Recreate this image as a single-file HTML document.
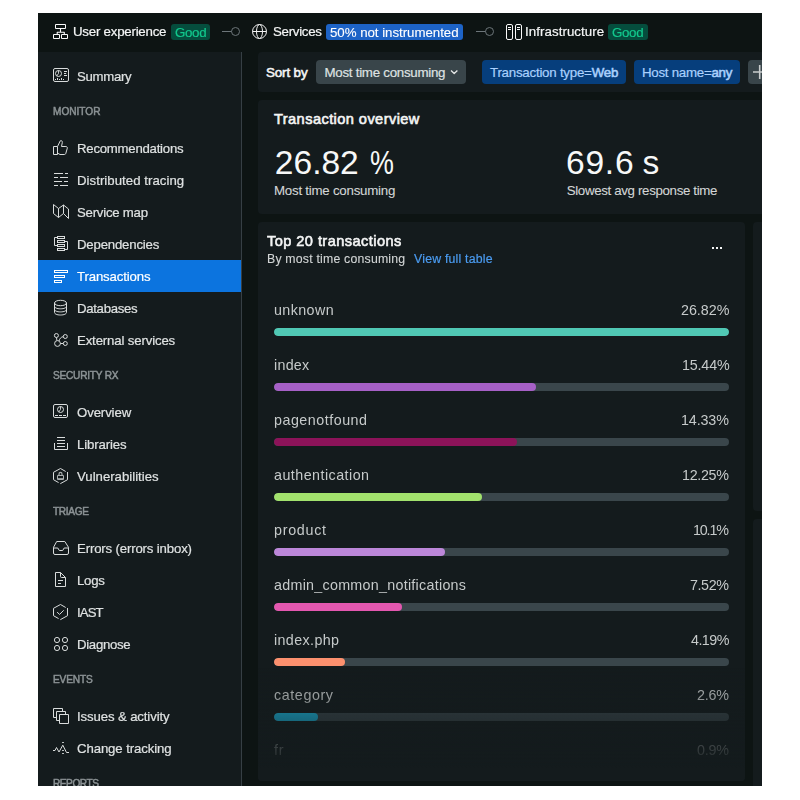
<!DOCTYPE html>
<html lang="en"><head><meta charset="utf-8"><title>Transactions</title>
<style>
html,body{margin:0;padding:0;background:#fff;}
body{width:800px;height:800px;position:relative;overflow:hidden;font-family:"Liberation Sans",sans-serif;}
#app{position:absolute;left:38px;top:13px;width:724px;height:773px;background:#0d1413;overflow:hidden;}
.abs{position:absolute;}
.t{position:absolute;white-space:nowrap;line-height:1;transform:translateY(-50%);-webkit-text-stroke:0.2px currentColor;will-change:transform;}
.t .sb{-webkit-text-stroke:0.55px currentColor;}
#topbar{left:0;top:0;width:724px;height:39px;background:#0d1413;}
#side{left:0;top:39px;width:203px;height:734px;background:#141b1d;border-right:1px solid #363f44;}
#sel{left:0;top:247px;width:203px;height:32px;background:#0c74df;}
.card{position:absolute;background:#141b1d;border-radius:4px;}
.badge{position:absolute;border-radius:3px;}
.track{position:absolute;left:236px;width:455px;height:8px;border-radius:4px;background:#3a464b;overflow:hidden;}
.fill{position:absolute;left:0;top:0;height:8px;border-radius:4px;}
svg{position:absolute;overflow:visible;}
</style></head><body><div id="app">

<div class="abs" id="topbar"></div>
<div class="abs" id="side"></div>
<div class="abs" id="sel"></div>
<div class="badge" style="left:133px;top:11px;width:39px;height:16px;background:#054d3d"></div>
<div class="badge" style="left:288.2px;top:11px;width:137.3px;height:16px;background:#1d63c6"></div>
<div class="badge" style="left:570px;top:11px;width:39.5px;height:16px;background:#054d3d"></div>
<div class="card" style="left:220px;top:39px;width:520px;height:40px;border-radius:4px 0 0 4px"></div>
<div class="abs" style="left:278px;top:47px;width:150px;height:24px;border-radius:4px;background:#39454a"></div>
<div class="abs" style="left:443.5px;top:47px;width:144.5px;height:24px;border-radius:4px;background:#063e7c"></div>
<div class="abs" style="left:595.5px;top:47px;width:106.5px;height:24px;border-radius:4px;background:#063e7c"></div>
<div class="abs" style="left:709.5px;top:47px;width:30px;height:24px;border-radius:4px;background:#39454a"></div>
<div class="card" style="left:220px;top:87px;width:520px;height:114px;border-radius:4px 0 0 4px"></div>
<div class="card" style="left:220px;top:209px;width:487px;height:559px"></div>
<div class="card" style="left:715px;top:209px;width:20px;height:289px"></div>
<div class="card" style="left:715px;top:506px;width:20px;height:300px"></div>
<div class="track" style="top:315px"><div class="fill" style="width:455.0px;background:#50c8b4"></div></div>
<div class="track" style="top:370px"><div class="fill" style="width:261.9px;background:#a660c6"></div></div>
<div class="track" style="top:425px"><div class="fill" style="width:243.1px;background:#8c1359"></div></div>
<div class="track" style="top:480px"><div class="fill" style="width:207.8px;background:#a2e26d"></div></div>
<div class="track" style="top:535px"><div class="fill" style="width:171.4px;background:#bc87d9"></div></div>
<div class="track" style="top:590px"><div class="fill" style="width:127.6px;background:#e357af"></div></div>
<div class="track" style="top:645px"><div class="fill" style="width:71.1px;background:#fc906e"></div></div>
<div class="track" style="top:700px"><div class="fill" style="width:44.1px;background:#1bbde7"></div></div>
<div class="track" style="top:755px"><div class="fill" style="width:15.3px;background:#555"></div></div>
<div class="t" id="t0" style="left:38.8px;top:64.0px;font-size:13.2px;font-weight:400;color:#dfe2e2;letter-spacing:-0.304px;">Summary</div>
<div class="t" id="t1" style="left:38.8px;top:136.0px;font-size:13.2px;font-weight:400;color:#dfe2e2;letter-spacing:-0.240px;">Recommendations</div>
<div class="t" id="t2" style="left:38.8px;top:168.0px;font-size:13.2px;font-weight:400;color:#dfe2e2;letter-spacing:0.045px;">Distributed tracing</div>
<div class="t" id="t3" style="left:38.8px;top:200.0px;font-size:13.2px;font-weight:400;color:#dfe2e2;letter-spacing:-0.230px;">Service map</div>
<div class="t" id="t4" style="left:38.8px;top:232.0px;font-size:13.2px;font-weight:400;color:#dfe2e2;letter-spacing:-0.184px;">Dependencies</div>
<div class="t" id="t5" style="left:39.4px;top:264.0px;font-size:13.2px;font-weight:400;color:#ffffff;letter-spacing:-0.129px;">Transactions</div>
<div class="t" id="t6" style="left:38.8px;top:296.0px;font-size:13.2px;font-weight:400;color:#dfe2e2;letter-spacing:-0.306px;">Databases</div>
<div class="t" id="t7" style="left:38.8px;top:328.0px;font-size:13.2px;font-weight:400;color:#dfe2e2;letter-spacing:-0.139px;">External services</div>
<div class="t" id="t8" style="left:38.8px;top:400.0px;font-size:13.2px;font-weight:400;color:#dfe2e2;letter-spacing:-0.110px;">Overview</div>
<div class="t" id="t9" style="left:38.8px;top:432.0px;font-size:13.2px;font-weight:400;color:#dfe2e2;letter-spacing:-0.122px;">Libraries</div>
<div class="t" id="t10" style="left:38.8px;top:464.0px;font-size:13.2px;font-weight:400;color:#dfe2e2;letter-spacing:-0.002px;">Vulnerabilities</div>
<div class="t" id="t11" style="left:38.8px;top:536.0px;font-size:13.2px;font-weight:400;color:#dfe2e2;letter-spacing:-0.149px;">Errors (errors inbox)</div>
<div class="t" id="t12" style="left:38.8px;top:568.0px;font-size:13.2px;font-weight:400;color:#dfe2e2;letter-spacing:-0.270px;">Logs</div>
<div class="t" id="t13" style="left:38.8px;top:600.0px;font-size:13.2px;font-weight:400;color:#dfe2e2;letter-spacing:-0.904px;">IAST</div>
<div class="t" id="t14" style="left:38.8px;top:632.0px;font-size:13.2px;font-weight:400;color:#dfe2e2;letter-spacing:-0.303px;">Diagnose</div>
<div class="t" id="t15" style="left:38.8px;top:704.0px;font-size:13.2px;font-weight:400;color:#dfe2e2;letter-spacing:-0.122px;">Issues &amp; activity</div>
<div class="t" id="t16" style="left:38.8px;top:736.0px;font-size:13.2px;font-weight:400;color:#dfe2e2;letter-spacing:-0.103px;">Change tracking</div>
<div class="t" id="t17" style="left:15.2px;top:99.3px;font-size:10.1px;font-weight:400;color:#8b9294;letter-spacing:0.003px;-webkit-text-stroke:0.5px #8b9294;">MONITOR</div>
<div class="t" id="t18" style="left:15.2px;top:363.3px;font-size:10.1px;font-weight:400;color:#8b9294;letter-spacing:-0.219px;-webkit-text-stroke:0.5px #8b9294;">SECURITY RX</div>
<div class="t" id="t19" style="left:15.2px;top:499.3px;font-size:10.1px;font-weight:400;color:#8b9294;letter-spacing:-0.316px;-webkit-text-stroke:0.5px #8b9294;">TRIAGE</div>
<div class="t" id="t20" style="left:15.2px;top:667.3px;font-size:10.1px;font-weight:400;color:#8b9294;letter-spacing:-0.118px;-webkit-text-stroke:0.5px #8b9294;">EVENTS</div>
<div class="t" id="t21" style="left:15.2px;top:771.3px;font-size:10.1px;font-weight:400;color:#8b9294;letter-spacing:-0.454px;-webkit-text-stroke:0.5px #8b9294;">REPORTS</div>
<div class="t" id="t22" style="left:35.0px;top:18.5px;font-size:13.3px;font-weight:400;color:#f4f5f5;letter-spacing:-0.238px;">User experience</div>
<div class="t" id="t23" style="left:136.8px;top:20.0px;font-size:13.3px;font-weight:400;color:#12c98d;letter-spacing:-0.310px;">Good</div>
<div class="t" id="t24" style="left:234.5px;top:18.5px;font-size:13.3px;font-weight:400;color:#f4f5f5;letter-spacing:-0.286px;">Services</div>
<div class="t" id="t25" style="left:292.4px;top:20.0px;font-size:13.3px;font-weight:400;color:#ffffff;letter-spacing:-0.040px;-webkit-text-stroke:0.1px;">50% not instrumented</div>
<div class="t" id="t26" style="left:487.3px;top:18.5px;font-size:13.3px;font-weight:400;color:#f4f5f5;letter-spacing:0.066px;">Infrastructure</div>
<div class="t" id="t27" style="left:573.8px;top:20.0px;font-size:13.3px;font-weight:400;color:#12c98d;letter-spacing:-0.310px;">Good</div>
<div class="t" id="t28" style="left:228.0px;top:59.5px;font-size:13.4px;font-weight:400;color:#f4f5f5;letter-spacing:-0.137px;will-change:auto;-webkit-text-stroke:0.55px;">Sort by</div>
<div class="t" id="t29" style="left:286.5px;top:60.0px;font-size:13.3px;font-weight:400;color:#dfe2e2;letter-spacing:-0.258px;will-change:auto;">Most time consuming</div>
<div class="t" id="t30" style="left:452.0px;top:60.0px;font-size:13.3px;font-weight:400;color:#a9d0fd;letter-spacing:-0.231px;will-change:auto;">Transaction type=<span class="sb">Web</span></div>
<div class="t" id="t31" style="left:604.0px;top:60.0px;font-size:13.3px;font-weight:400;color:#a9d0fd;letter-spacing:-0.268px;will-change:auto;">Host name=<span class="sb">any</span></div>
<div class="t" id="t32" style="left:236.0px;top:106.0px;font-size:14.6px;font-weight:400;color:#f4f5f5;letter-spacing:0.424px;will-change:auto;-webkit-text-stroke:0.6px;">Transaction overview</div>
<div class="t" id="t33" style="left:236.8px;top:150.4px;font-size:33.6px;font-weight:400;color:#f7f8f8;letter-spacing:-0.008px;will-change:auto;-webkit-text-stroke:0;">26.82</div>
<div class="t" id="t34" style="left:332.1px;top:150.4px;font-size:33.6px;font-weight:400;color:#f7f8f8;letter-spacing:0.000px;will-change:auto;-webkit-text-stroke:0;transform-origin:0 50%;transform:translateY(-50%) scaleX(0.80);">%</div>
<div class="t" id="t35" style="left:236.0px;top:178.0px;font-size:13.3px;font-weight:400;color:#d3d6d6;letter-spacing:-0.241px;will-change:auto;-webkit-text-stroke:0.1px;">Most time consuming</div>
<div class="t" id="t36" style="left:528.0px;top:150.4px;font-size:33.6px;font-weight:400;color:#f7f8f8;letter-spacing:0.747px;will-change:auto;-webkit-text-stroke:0;">69.6</div>
<div class="t" id="t37" style="left:604.4px;top:150.4px;font-size:33.6px;font-weight:400;color:#f7f8f8;letter-spacing:0.000px;will-change:auto;-webkit-text-stroke:0;">s</div>
<div class="t" id="t38" style="left:528.7px;top:178.0px;font-size:13.3px;font-weight:400;color:#d3d6d6;letter-spacing:-0.338px;will-change:auto;-webkit-text-stroke:0.1px;">Slowest avg response time</div>
<div class="t" id="t39" style="left:228.6px;top:228.0px;font-size:14.6px;font-weight:400;color:#f4f5f5;letter-spacing:0.430px;-webkit-text-stroke:0.6px;">Top 20 transactions</div>
<div class="t" id="t40" style="left:228.6px;top:245.5px;font-size:12.3px;font-weight:400;color:#d3d6d6;letter-spacing:0.202px;-webkit-text-stroke:0.1px;">By most time consuming</div>
<div class="t" id="t41" style="left:375.9px;top:245.5px;font-size:12.3px;font-weight:400;color:#4a9bf0;letter-spacing:0.210px;">View full table</div>
<div class="t" id="t42" style="left:236.0px;top:297.0px;font-size:14.3px;font-weight:400;color:#c6caca;letter-spacing:0.394px;-webkit-text-stroke:0;">unknown</div>
<div class="t" id="t43" style="left:642.8px;top:297.0px;font-size:14.3px;font-weight:400;color:#c6caca;letter-spacing:-0.020px;-webkit-text-stroke:0;">26.82%</div>
<div class="t" id="t44" style="left:236.0px;top:352.0px;font-size:14.3px;font-weight:400;color:#c6caca;letter-spacing:0.253px;-webkit-text-stroke:0;">index</div>
<div class="t" id="t45" style="left:643.5px;top:352.0px;font-size:14.3px;font-weight:400;color:#c6caca;letter-spacing:-0.170px;-webkit-text-stroke:0;">15.44%</div>
<div class="t" id="t46" style="left:236.0px;top:407.0px;font-size:14.3px;font-weight:400;color:#c6caca;letter-spacing:0.503px;-webkit-text-stroke:0;">pagenotfound</div>
<div class="t" id="t47" style="left:643.3px;top:407.0px;font-size:14.3px;font-weight:400;color:#c6caca;letter-spacing:-0.120px;-webkit-text-stroke:0;">14.33%</div>
<div class="t" id="t48" style="left:236.0px;top:462.0px;font-size:14.3px;font-weight:400;color:#c6caca;letter-spacing:0.459px;-webkit-text-stroke:0;">authentication</div>
<div class="t" id="t49" style="left:644.3px;top:462.0px;font-size:14.3px;font-weight:400;color:#c6caca;letter-spacing:-0.320px;-webkit-text-stroke:0;">12.25%</div>
<div class="t" id="t50" style="left:236.0px;top:517.0px;font-size:14.3px;font-weight:400;color:#c6caca;letter-spacing:0.719px;-webkit-text-stroke:0;">product</div>
<div class="t" id="t51" style="left:655.3px;top:517.0px;font-size:14.3px;font-weight:400;color:#c6caca;letter-spacing:-1.162px;-webkit-text-stroke:0;">10.1%</div>
<div class="t" id="t52" style="left:236.0px;top:572.0px;font-size:14.3px;font-weight:400;color:#c6caca;letter-spacing:0.273px;-webkit-text-stroke:0;">admin_common_notifications</div>
<div class="t" id="t53" style="left:652.3px;top:572.0px;font-size:14.3px;font-weight:400;color:#c6caca;letter-spacing:-0.412px;-webkit-text-stroke:0;">7.52%</div>
<div class="t" id="t54" style="left:236.0px;top:627.0px;font-size:14.3px;font-weight:400;color:#c6caca;letter-spacing:0.373px;-webkit-text-stroke:0;">index.php</div>
<div class="t" id="t55" style="left:652.8px;top:627.0px;font-size:14.3px;font-weight:400;color:#c6caca;letter-spacing:-0.537px;-webkit-text-stroke:0;">4.19%</div>
<div class="t" id="t56" style="left:236.0px;top:682.0px;font-size:14.3px;font-weight:400;color:#c6caca;letter-spacing:0.594px;-webkit-text-stroke:0;">category</div>
<div class="t" id="t57" style="left:659.3px;top:682.0px;font-size:14.3px;font-weight:400;color:#c6caca;letter-spacing:-0.231px;-webkit-text-stroke:0;">2.6%</div>
<div class="t" id="t58" style="left:236.0px;top:737.0px;font-size:14.3px;font-weight:400;color:#c6caca;letter-spacing:0.866px;-webkit-text-stroke:0;">fr</div>
<div class="t" id="t59" style="left:659.3px;top:737.0px;font-size:14.3px;font-weight:400;color:#c6caca;letter-spacing:-0.231px;-webkit-text-stroke:0;">0.9%</div>
<svg style="left:0;top:0" width="724" height="773" viewBox="38 13 724 773" fill="none" stroke-width="1" stroke-linejoin="round" stroke-linecap="butt">
<!-- top bar: user experience -->
<g stroke="#fafafa">
<rect x="55.5" y="24.5" width="10" height="4"/>
<path d="M60.5 28.5V32.2M57.2 34.5V32.2H64.3V34.5" stroke-width="1.1"/>
<rect x="53.5" y="34.5" width="6" height="4"/>
<rect x="61.5" y="34.5" width="6" height="4"/>
</g>
<!-- connectors -->
<g stroke="#6c7579">
<path d="M222 31.5H231.5"/><circle cx="235.5" cy="31.5" r="4"/>
<path d="M476 31.5H485.5"/><circle cx="489.5" cy="31.5" r="4"/>
</g>
<!-- globe -->
<g stroke="#f2f2f2">
<circle cx="259.5" cy="31.5" r="7"/>
<ellipse cx="259.5" cy="31.5" rx="3" ry="7"/>
<path d="M252.5 31.5H266.5"/>
</g>
<!-- infrastructure -->
<g stroke="#fafafa">
<rect x="506.5" y="24.5" width="6" height="15" rx="1.5"/>
<rect x="515.5" y="24.5" width="6" height="15" rx="1.5"/>
<path d="M508 27.5H511M508 29.5H511M517 27.5H520M517 29.5H520"/>
</g>
<!-- filter bar chevron, plus -->
<path d="M451 70.5L454.2 73.5L457.4 70.5" stroke="#e6e8e8" stroke-width="1.3"/>
<path d="M753 72H768M759.7 65V79" stroke="#c9cdcd" stroke-width="1.6"/>
<!-- ellipsis -->
<g fill="#f4f5f5" stroke="none"><rect x="712" y="247" width="2" height="2"/><rect x="716" y="247" width="2" height="2"/><rect x="720" y="247" width="2" height="2"/></g>

<!-- sidebar icons -->
<g stroke="#d9dcdc">
<!-- summary -->
<rect x="53.5" y="68.5" width="15" height="13" rx="1.5"/>
<circle cx="58.5" cy="73.5" r="3"/>
<path d="M58.5 70.5V73.5L56.7 76" stroke-width="0.9"/>
<path d="M64 71.5H67M64 73.5H66.2M64 75.5H67"/>
<path d="M55 79.5H56M59 79.5H60M63 79.5H64M57.5 78V80M61.5 78V80"/>
<!-- recommendations -->
<rect x="53.5" y="146.5" width="4" height="8"/>
<path d="M57.5 146.5L60.3 140.8C61.6 140.2 62.6 141.2 62.3 142.6L61.5 146.5H65.9C66.9 146.5 67.5 147.3 67.3 148.2L65.8 153.4C65.6 154.1 65.1 154.5 64.4 154.5H60L57.5 153" stroke-linejoin="miter"/>
<!-- distributed tracing -->
<path d="M54 173.5H63M65 173.5H68M54 177.5H58M60 177.5H68M54 181.5H62M64 181.5H68M54 185.5H58M60 185.5H68"/>
<!-- service map -->
<path d="M53.5 204.5V213.5L58.5 217.5V208.5ZM58.5 208.5L63.5 205V213.5L58.5 217.5M63.5 205L68.5 209V218.5L63.5 213.5"/>
<!-- dependencies -->
<g stroke-linejoin="miter"><rect x="57.5" y="236.5" width="7" height="2"/><rect x="57.5" y="240.5" width="7" height="2"/>
<rect x="57.5" y="244.5" width="7" height="2"/><rect x="57.5" y="248.5" width="7" height="2"/></g>
<path d="M57.5 237.5H54.5V245.5H57.5M64.5 241.5H67.5V249.5H64.5" stroke-linejoin="miter"/>
<!-- databases -->
<ellipse cx="60.5" cy="303" rx="6" ry="2.7"/>
<path d="M54.5 303V312.3C54.5 314 57 315 60.5 315S66.5 314 66.5 312.3V303M54.5 306.1C54.5 307.8 57 308.8 60.5 308.8S66.5 307.8 66.5 306.1M54.5 309.2C54.5 310.9 57 311.9 60.5 311.9S66.5 310.9 66.5 309.2"/>
<!-- external services -->
<circle cx="56.4" cy="335.5" r="2"/><circle cx="57.5" cy="343.5" r="2.9"/><circle cx="65.3" cy="336.5" r="2"/><circle cx="65.3" cy="343.5" r="2"/>
<path d="M56.5 337.5L56.9 340.6M59 341C59.6 338.6 61 337 63.3 336.6M60.4 343.5H63.3"/>
<!-- overview -->
<rect x="53.5" y="404.5" width="14" height="13" rx="1.5"/>
<circle cx="60.5" cy="409.5" r="3"/>
<path d="M60.5 406.5V409.5L58.7 412" stroke-width="0.9"/>
<path d="M55 415.5H58M59 415.5H62M63 415.5H66"/>
<!-- libraries -->
<path d="M57 437.5H65M57 440.5H65M57 443.5H65M57 446.5H65M54.5 443V449.5H67.5V443"/>
<!-- vulnerabilities -->
<path d="M65.7 471.5L60.5 468.5L53.5 472.3V479.7L58.6 482.6M60.3 483.7L67.5 479.7V472"/>
<rect x="57.5" y="475.5" width="6" height="4" stroke="#a9aeae"/>
<path d="M59 475.5V474.2C59 471.8 62 471.8 62 474.2V475.5" stroke="#a9aeae" stroke-width="1.2"/>
<path d="M58 478.7H63" stroke="#a9aeae"/>
<!-- errors inbox -->
<path d="M56.7 541.5H64.8L68.5 547.3V553Q68.5 554.5 67 554.5H55Q53.5 554.5 53.5 553V547.3Z"/>
<path d="M53.5 548H57.8L59.3 550.5H62.7L64.2 548H68.5"/>
<!-- logs -->
<path d="M55.5 572.5H60.5L65.5 577.5V586.5H55.5ZM60.5 572.5V576.5Q60.5 577.5 61.5 577.5H65.5M58 580.5H63M58 583.5H61"/>
<!-- iast -->
<path d="M65.7 607.5L60.5 604.5L53.5 608.3V615.7L58.6 618.6M60.3 619.7L67.5 615.7V608"/>
<path d="M57.1 612.2L59.6 614.4L63.7 610.3"/>
<!-- diagnose -->
<circle cx="57" cy="640" r="2.6"/><circle cx="65" cy="640" r="2.6"/><circle cx="57" cy="648" r="2.6"/><circle cx="65" cy="648" r="2.6"/>
<!-- issues & activity -->
<g fill="#141b1d"><rect x="53.5" y="708.5" width="9" height="9"/><rect x="56.5" y="711.5" width="9" height="9"/><rect x="59.5" y="714.5" width="9" height="9"/></g>
<!-- change tracking -->
<path d="M53 750.5H55L56.5 747.5L59 752L62.8 745.2L66.5 752.5H69"/>
<path d="M62 742.5H64M62 750.5H64M62 753.5H64" stroke="#b9bebe"/>
</g>
<!-- transactions (selected) -->
<g stroke="#ffffff" stroke-linejoin="miter">
<rect x="54.5" y="270.5" width="13" height="2"/><rect x="54.5" y="275.5" width="10" height="2"/><rect x="54.5" y="280.5" width="7" height="2"/>
</g>
</svg>

<div class="abs" style="left:220px;top:655px;width:487px;height:113px;border-radius:0 0 4px 4px;background:linear-gradient(to bottom,rgba(20,27,29,0) 0,rgba(20,27,29,1) 100px,rgba(20,27,29,1) 100%)"></div>

</div></body></html>
